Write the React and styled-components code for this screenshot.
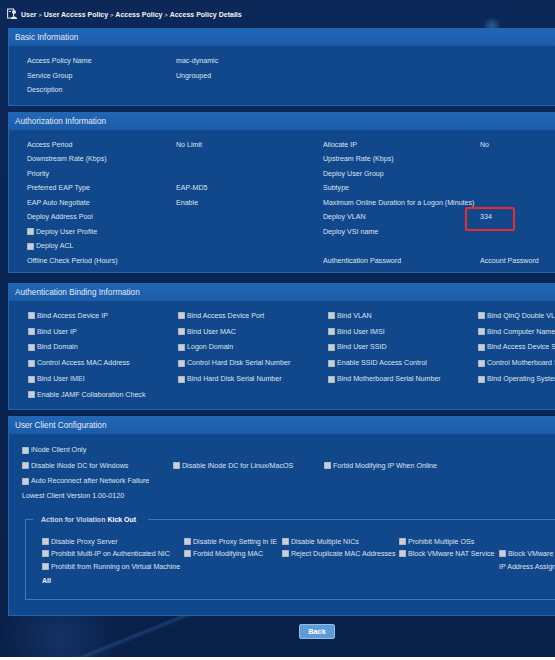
import React from 'react';
import styled, { createGlobalStyle } from 'styled-components';

const GlobalStyle = createGlobalStyle`
  html, body {
    margin: 0;
    padding: 0;
    background: #fff;
    overflow: hidden;
  }
  body {
    font-family: "Liberation Sans", Arial, sans-serif;
  }
`;

const Page = styled.div`
  width: 555px;
  height: 657px;
  overflow: hidden;
  color: #dde3ec;
  font-size: 7.1px;
  background:
    radial-gradient(circle at 492px 26px, rgba(120, 190, 255, 0.35) 0, transparent 9px),
    linear-gradient(158deg, transparent 78%, rgba(80, 150, 240, 0.22) 78.3%, transparent 78.8%),
    radial-gradient(circle at 60px 640px, rgba(60, 120, 220, 0.2) 0, transparent 60px),
    linear-gradient(180deg, #0b2858 0%, #0a2451 60%, #092048 100%);
`;

const Inner = styled.div`
  width: 620px;
  margin-left: 8px;
  display: flex;
  flex-direction: column;
`;

const Breadcrumb = styled.div`
  height: 28px;
  display: flex;
  align-items: center;
  gap: 3px;
  margin-left: -1px;
  font-size: 7px;
  font-weight: bold;
  color: #f2f5fa;
`;

const Sep = styled.span`
  color: #c9d3e2;
  font-size: 5.5px;
  margin: 0 2px;
`;

const Panel = styled.section`
  margin-bottom: ${p => p.$gap || 0}px;
  border: 1px solid #2464b0;
  border-right: none;
  background: #11488c;
`;

const PanelHeader = styled.div`
  height: 17px;
  display: flex;
  align-items: center;
  padding-left: 6px;
  font-size: 8.2px;
  color: #e3ebf6;
  background: linear-gradient(180deg, #2166b6 0%, #1b5ca9 100%);
`;

const InfoGrid = styled.div`
  display: grid;
  grid-template-columns: 149px 147px 157px 1fr;
  grid-auto-rows: 14.5px;
  align-items: center;
  padding: ${p => p.$pad || '8px 0 5px 18px'};
`;

const Cell = styled.div`
  position: relative;
  white-space: nowrap;
  display: flex;
  align-items: center;
  gap: 2px;
`;

const Highlight = styled.div`
  position: absolute;
  left: -15px;
  top: -6px;
  width: 46px;
  height: 20px;
  border: 2px solid #ee2a2a;
  border-radius: 2px;
`;

const CheckGrid = styled.div`
  display: grid;
  grid-template-columns: ${p => p.$cols};
  grid-template-rows: ${p => p.$rows || 'none'};
  grid-auto-rows: ${p => p.$rowH};
  align-items: center;
  padding: ${p => p.$pad};
`;

const Box = styled.span`
  flex: none;
  width: 7px;
  height: 7px;
  background: #c9cfd9;
  box-shadow: inset 0 0 0 0.6px #98a2b2;
`;

const Item = styled.div`
  display: flex;
  align-items: center;
  gap: ${p => p.$gap || 2}px;
  white-space: nowrap;
  grid-column: ${p => p.$span || 'auto'};
`;

const Fieldset = styled.fieldset`
  margin: 12px 0 15px 16px;
  padding: 12px 0 11px 16px;
  border: 1px solid #3f76bd;
  border-right: none;
  min-width: 0;
`;

const Legend = styled.legend`
  margin-left: -9px;
  padding: 0 12px 0 8px;
  font-size: 7px;
  font-weight: bold;
  color: #c9d3e2;
  line-height: 8px;
`;

const Strong = styled.span`
  color: #ffffff;
`;

const AllLabel = styled.div`
  font-weight: bold;
  color: #f1f5fb;
`;

const BackButton = styled.button`
  align-self: flex-start;
  margin: 8px 0 0 291px;
  width: 36px;
  height: 15px;
  padding: 0;
  border: 1px solid #8fbde8;
  border-radius: 2px;
  background: #5d9cd8;
  color: #ffffff;
  font-family: "Liberation Sans", Arial, sans-serif;
  font-size: 7.4px;
  font-weight: bold;
`;

const UserIcon = () => (
  <svg width="11" height="12" viewBox="0 0 11 12">
    <rect x="0.6" y="1" width="6" height="9" fill="none" stroke="#e8eef7" strokeWidth="1" />
    <circle cx="7" cy="4" r="2" fill="#e8eef7" />
    <path d="M3.8 11 C3.8 7.6 10.2 7.6 10.2 11 Z" fill="#e8eef7" />
    <rect x="1.8" y="3" width="2" height="1" fill="#e8eef7" />
  </svg>
);

const Check = ({ children, span }) => (
  <Item $span={span}>
    <Box />
    <span>{children}</span>
  </Item>
);

const authRows = [
  ['Access Period', 'No Limit', 'Allocate IP', 'No'],
  ['Downstream Rate (Kbps)', '', 'Upstream Rate (Kbps)', ''],
  ['Priority', '', 'Deploy User Group', ''],
  ['Preferred EAP Type', 'EAP-MD5', 'Subtype', ''],
  ['EAP Auto Negotiate', 'Enable', 'Maximum Online Duration for a Logon (Minutes)', ''],
  ['Deploy Address Pool', '', 'Deploy VLAN', '334'],
  ['#Deploy User Profile', '', 'Deploy VSI name', ''],
  ['#Deploy ACL', '', '', ''],
  ['Offline Check Period (Hours)', '', 'Authentication Password', 'Account Password'],
];

const bindings = [
  'Bind Access Device IP', 'Bind Access Device Port', 'Bind VLAN', 'Bind QinQ Double VLAN',
  'Bind User IP', 'Bind User MAC', 'Bind User IMSI', 'Bind Computer Name',
  'Bind Domain', 'Logon Domain', 'Bind User SSID', 'Bind Access Device SSID',
  'Control Access MAC Address', 'Control Hard Disk Serial Number', 'Enable SSID Access Control', 'Control Motherboard Serial Number',
  'Bind User IMEI', 'Bind Hard Disk Serial Number', 'Bind Motherboard Serial Number', 'Bind Operating System',
  'Enable JAMF Collaboration Check',
];

const renderCell = (text, key) => {
  if (text.startsWith('#')) {
    return (
      <Cell key={key}>
        <Box />
        <span>{text.slice(1)}</span>
      </Cell>
    );
  }
  if (text === '334') {
    return (
      <Cell key={key}>
        {text}
        <Highlight />
      </Cell>
    );
  }
  return <Cell key={key}>{text}</Cell>;
};

export default function App() {
  return (
    <Page>
      <GlobalStyle />
      <Inner>
        <Breadcrumb>
          <UserIcon />
          <span>
            User<Sep>&gt;</Sep>User Access Policy<Sep>&gt;</Sep>Access Policy<Sep>&gt;</Sep>Access Policy Details
          </span>
        </Breadcrumb>

        <Panel $gap={6}>
          <PanelHeader>Basic Information</PanelHeader>
          <InfoGrid $pad="8px 0 7px 18px">
            <Cell>Access Policy Name</Cell><Cell>mac-dynamic</Cell><Cell /><Cell />
            <Cell>Service Group</Cell><Cell>Ungrouped</Cell><Cell /><Cell />
            <Cell>Description</Cell><Cell /><Cell /><Cell />
          </InfoGrid>
        </Panel>

        <Panel $gap={10}>
          <PanelHeader>Authorization Information</PanelHeader>
          <InfoGrid $pad="8px 0 4px 18px">
            {authRows.map((row, i) => row.map((t, j) => renderCell(t, `${i}-${j}`)))}
          </InfoGrid>
        </Panel>

        <Panel $gap={6}>
          <PanelHeader>Authentication Binding Information</PanelHeader>
          <CheckGrid $cols="150px 150px 150px 1fr" $rowH="15.8px" $pad="7px 0 6px 19px">
            {bindings.map(b => <Check key={b}>{b}</Check>)}
          </CheckGrid>
        </Panel>

        <Panel>
          <PanelHeader>User Client Configuration</PanelHeader>
          <CheckGrid $cols="151px 151px 1fr" $rowH="15.3px" $pad="9px 0 0 13px">
            <Check span="1 / -1">iNode Client Only</Check>
            <Check>Disable iNode DC for Windows</Check>
            <Check>Disable iNode DC for Linux/MacOS</Check>
            <Check>Forbid Modifying IP When Online</Check>
            <Check span="1 / -1">Auto Reconnect after Network Failure</Check>
            <Item $span="1 / -1">Lowest Client Version 1.00-0120</Item>
          </CheckGrid>
          <Fieldset>
            <Legend>
              Action for Violation <Strong>Kick Out</Strong>
            </Legend>
            <CheckGrid $cols="142px 98px 117px 100px 1fr" $rows="12px 12px 14px 14px" $rowH="14px" $pad="0">
              <Check>Disable Proxy Server</Check>
              <Check>Disable Proxy Setting in IE</Check>
              <Check>Disable Multiple NICs</Check>
              <Check>Prohibit Multiple OSs</Check>
              <div />
              <Check>Prohibit Multi-IP on Authenticated NIC</Check>
              <Check>Forbid Modifying MAC</Check>
              <Check>Reject Duplicate MAC Addresses</Check>
              <Check>Block VMware NAT Service</Check>
              <Check>Block VMware USB Service</Check>
              <Check span="1 / 5">Prohibit from Running on Virtual Machine</Check>
              <Item>IP Address Assignment</Item>
              <AllLabel>All</AllLabel>
            </CheckGrid>
          </Fieldset>
        </Panel>

        <BackButton>Back</BackButton>
      </Inner>
    </Page>
  );
}
